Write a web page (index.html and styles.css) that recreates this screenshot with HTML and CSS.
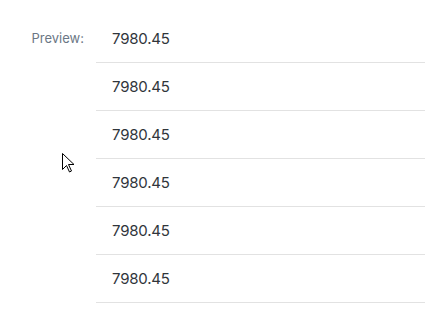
FILE: index.html
```html
<!DOCTYPE html>
<html>
<head>
<meta charset="utf-8">
<link rel="stylesheet" href="styles.css">
</head>
<body>
<div class="field">
  <div class="label">Preview:</div>
  <div class="list">
    <div class="row">7980.45</div>
    <div class="row">7980.45</div>
    <div class="row">7980.45</div>
    <div class="row">7980.45</div>
    <div class="row">7980.45</div>
    <div class="row">7980.45</div>
  </div>
</div>
<svg class="cursor" width="13" height="20" viewBox="0 0 13 20">
  <path d="M0.5 0.5 L0.5 16.5 L4.5 12.5 L7.5 19 L9.5 18 L6.5 11.5 L12 11.5 Z" fill="#fff" stroke="#000" stroke-width="1" stroke-linejoin="miter"/>
</svg>
</body>
</html>
```
FILE: styles.css
```css
html, body {
  margin: 0;
  padding: 0;
  background: #fff;
}
body {
  width: 425px;
  height: 336px;
  overflow: hidden;
  position: relative;
  font-family: Inter, "Open Sans", sans-serif;
}
.field {
  display: flex;
  padding-top: 15px;
}
.label {
  width: 84px;
  padding-right: 12px;
  text-align: right;
  font-size: 13px;
  line-height: 47px;
  color: #6b7785;
}
.list {
  flex: 1;
}
.row {
  height: 47px;
  line-height: 47px;
  border-bottom: 1px solid #e2e2e2;
  padding-left: 16px;
  font-size: 15px;
  letter-spacing: -0.2px;
  color: #30353b;
}
.cursor {
  position: absolute;
  left: 62px;
  top: 153px;
}
```
